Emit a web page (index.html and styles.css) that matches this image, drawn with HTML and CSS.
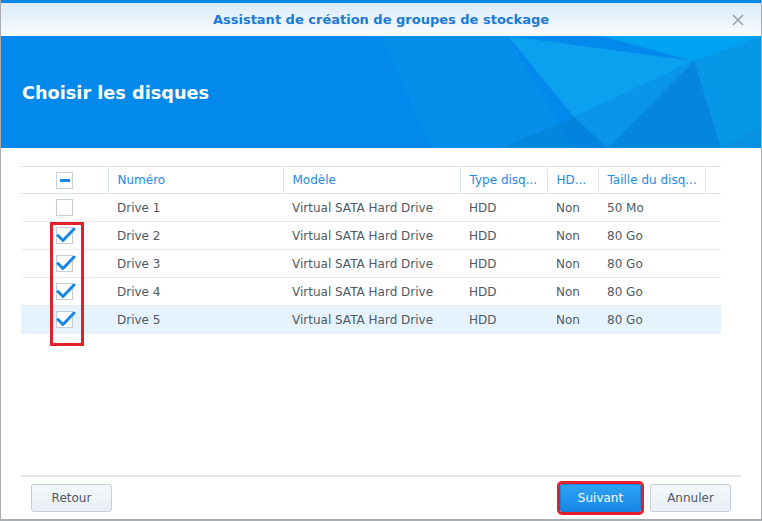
FILE: index.html
```html
<!DOCTYPE html>
<html lang="fr">
<head>
<meta charset="utf-8">
<link rel="stylesheet" href="styles.css">
</head>
<body>
<div class="window">
  <div class="topstrip"></div>
  <div class="titlebar">
    <span></span>
    <span class="title">Assistant de création de groupes de stockage</span>
    <span class="close"><svg width="12" height="12" viewBox="0 0 12 12"><path d="M1 1L11 11M11 1L1 11" stroke="#9aa3ab" stroke-width="1.6"/></svg></span>
  </div>
  <div class="banner">
    <svg class="banner-art" width="762" height="112" viewBox="0 0 762 112" preserveAspectRatio="none">
      <polygon points="380,0 507,0 573,112 430,112" fill="#0893eb" opacity="0.6"/>
      <polygon points="507,0 693,25 573,81" fill="#10aaf0" opacity="0.75"/>
      <polygon points="573,81 693,25 607,112" fill="#0b9ae8" opacity="0.8"/>
      <polygon points="573,81 607,112 500,112" fill="#0381d8" opacity="0.7"/>
      <polygon points="693,25 762,0 762,112 720,112" fill="#0a9ae6" opacity="0.8"/>
      <polygon points="693,25 720,112 607,112" fill="#0386d9" opacity="0.85"/>
      <polygon points="600,0 762,0 693,25" fill="#00aaf4" opacity="0.8"/>
      <polygon points="720,112 762,90 762,112" fill="#0a8fdd" opacity="0.6"/>
    </svg>
    <h1 class="heading">Choisir les disques</h1>
  </div>
  <div class="content">
    <table class="grid">
      <colgroup>
        <col class="c-check"><col class="c-num"><col class="c-model"><col class="c-type"><col class="c-hd"><col class="c-size"><col class="c-rest">
      </colgroup>
      <thead>
        <tr>
          <th class="cb-cell"><span class="cb partial"><span class="bar"></span></span></th>
          <th>Numéro</th><th>Modèle</th><th>Type disq...</th><th>HD...</th><th>Taille du disq...</th><th class="last"></th>
        </tr>
      </thead>
      <tbody>
        <tr>
          <td class="cb-cell"><span class="cb"></span></td>
          <td>Drive 1</td><td>Virtual SATA Hard Drive</td><td>HDD</td><td>Non</td><td>50 Mo</td><td></td>
        </tr>
        <tr>
          <td class="cb-cell"><span class="cb checked"><svg width="20" height="18" viewBox="0 0 20 18"><path d="M2 9.5L7 14.5L18 3" fill="none" stroke="#1787e6" stroke-width="3" stroke-linecap="round" stroke-linejoin="round"/></svg></span></td>
          <td>Drive 2</td><td>Virtual SATA Hard Drive</td><td>HDD</td><td>Non</td><td>80 Go</td><td></td>
        </tr>
        <tr>
          <td class="cb-cell"><span class="cb checked"><svg width="20" height="18" viewBox="0 0 20 18"><path d="M2 9.5L7 14.5L18 3" fill="none" stroke="#1787e6" stroke-width="3" stroke-linecap="round" stroke-linejoin="round"/></svg></span></td>
          <td>Drive 3</td><td>Virtual SATA Hard Drive</td><td>HDD</td><td>Non</td><td>80 Go</td><td></td>
        </tr>
        <tr>
          <td class="cb-cell"><span class="cb checked"><svg width="20" height="18" viewBox="0 0 20 18"><path d="M2 9.5L7 14.5L18 3" fill="none" stroke="#1787e6" stroke-width="3" stroke-linecap="round" stroke-linejoin="round"/></svg></span></td>
          <td>Drive 4</td><td>Virtual SATA Hard Drive</td><td>HDD</td><td>Non</td><td>80 Go</td><td></td>
        </tr>
        <tr class="selected">
          <td class="cb-cell"><span class="cb checked"><svg width="20" height="18" viewBox="0 0 20 18"><path d="M2 9.5L7 14.5L18 3" fill="none" stroke="#1787e6" stroke-width="3" stroke-linecap="round" stroke-linejoin="round"/></svg></span></td>
          <td>Drive 5</td><td>Virtual SATA Hard Drive</td><td>HDD</td><td>Non</td><td>80 Go</td><td></td>
        </tr>
      </tbody>
    </table>
    <div class="highlight-box"></div>
  </div>
  <div class="footer">
    <button class="btn">Retour</button>
    <div class="right-btns">
      <button class="btn primary">Suivant</button>
      <button class="btn">Annuler</button>
    </div>
  </div>
</div>
</body>
</html>
```
FILE: styles.css
```css
* { box-sizing: border-box; }
html, body { margin: 0; padding: 0; background: #ffffff; }
body {
  width: 762px;
  height: 521px;
  overflow: hidden;
  font-family: "DejaVu Sans", Verdana, sans-serif;
}
.window {
  width: 762px;
  height: 521px;
  border-left: 1px solid #a9adb1;
  border-right: 1px solid #a9adb1;
  border-bottom: 2px solid #a9adb1;
  display: flex;
  flex-direction: column;
  background: #fff;
}
.topstrip { height: 3px; background: #0288e6; flex: none; }
.titlebar {
  height: 33px;
  flex: none;
  display: grid;
  grid-template-columns: 1fr auto 1fr;
  align-items: center;
  background: linear-gradient(#dbebf8, #f9fcff);
}
.title {
  font-family: "DejaVu Sans", sans-serif;
  font-weight: bold;
  font-size: 13px;
  color: #1a7bd6;
}
.close {
  justify-self: end;
  padding-right: 17px;
  display: flex;
}
.banner {
  height: 112px;
  flex: none;
  position: relative;
  background: #0289eb;
  display: flex;
  align-items: center;
  overflow: hidden;
}
.banner-art { position: absolute; left: 0; top: 0; }
.heading {
  position: relative;
  margin: 2px 0 0 21px;
  font-size: 17.7px;
  font-weight: bold;
  color: #ffffff;
  font-family: "DejaVu Sans", sans-serif;
}
.content {
  position: relative;
  padding: 18px 0 0 20px;
  flex: 1;
}
.grid {
  border-collapse: collapse;
  table-layout: fixed;
  width: 700px;
  font-size: 12px;
  font-family: "DejaVu Sans", sans-serif;
}
.c-check { width: 87px; }
.c-num { width: 175px; }
.c-model { width: 177px; }
.c-type { width: 87px; }
.c-hd { width: 51px; }
.c-size { width: 107px; }
.c-rest { width: 16px; }
.grid th {
  height: 27px;
  font-weight: normal;
  text-align: left;
  color: #2589e6;
  padding: 0 0 0 9px;
  border-top: 1px solid #d5e0ea;
  border-bottom: 1px solid #d5e0ea;
  border-right: 1px solid #dce8f3;
  white-space: nowrap;
}
.grid th.last { border-right: none; }
.grid td {
  height: 28px;
  padding: 0 0 0 9px;
  color: #4f5a64;
  border-bottom: 1px solid #e8ebee;
  white-space: nowrap;
}
.grid .cb-cell { padding: 0; text-align: center; }
.grid tr.selected td { background: #e6f3fd; border-bottom-color: #e6f3fd; }
.cb {
  display: inline-block;
  width: 17px;
  height: 17px;
  border: 1px solid #c4ccd5;
  background: #fff;
  vertical-align: middle;
  position: relative;
}
.cb.partial { border-color: #c8d0d8; }
.cb .bar {
  position: absolute;
  left: 3px;
  top: 6px;
  width: 10px;
  height: 3px;
  background: #1787e6;
}
.cb svg { position: absolute; left: -1px; top: -2px; }
.highlight-box {
  position: absolute;
  left: 49px;
  top: 74px;
  width: 34px;
  height: 124px;
  border: 3px solid #e2202b;
}
.footer {
  flex: none;
  margin: 0 20px 0 20px;
  border-top: 2px solid #e6e6e6;
  padding: 7px 10px 7px 10px;
  display: flex;
  justify-content: space-between;
  align-items: center;
}
.right-btns { display: flex; gap: 9px; }
.btn {
  width: 81px;
  height: 28px;
  border: 1px solid #c5ced8;
  border-radius: 3px;
  background: linear-gradient(#f4f8fb, #e9eff5);
  color: #4d5966;
  font-family: "DejaVu Sans", sans-serif;
  font-size: 12px;
  padding: 0;
}
.btn.primary {
  border: 1px solid #1a82d6;
  background: linear-gradient(#2ea3f5, #1787e6);
  color: #ffffff;
  border-radius: 2px;
  outline: 3px solid #e2202b;
  outline-offset: 0;
}
```
